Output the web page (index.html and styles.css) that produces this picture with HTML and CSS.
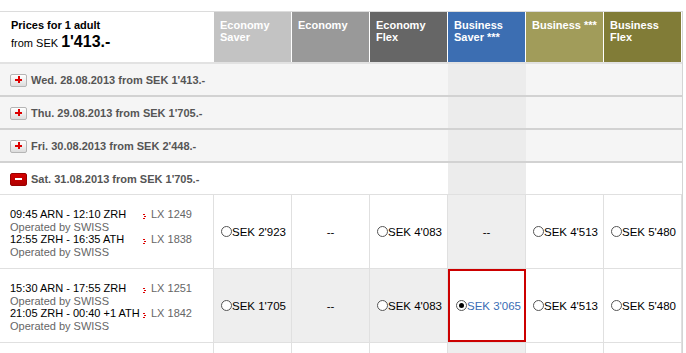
FILE: index.html
```html
<!DOCTYPE html>
<html>
<head>
<meta charset="utf-8">
<link rel="stylesheet" href="styles.css">
</head>
<body>
<div class="table">
  <div class="head">
    <div class="hcell first">
      <div class="pf">Prices for 1 adult</div>
      <div class="from">from SEK <b>1'413.-</b></div>
    </div>
    <div class="hcell c1">Economy<br>Saver</div>
    <div class="hcell c2">Economy</div>
    <div class="hcell c3">Economy<br>Flex</div>
    <div class="hcell c4">Business<br>Saver ***</div>
    <div class="hcell c5">Business ***</div>
    <div class="hcell c6">Business<br>Flex</div>
  </div>

  <div class="day">
    <div class="dlabel"><span class="btn plus"></span>Wed. 28.08.2013 from SEK 1'413.-</div>
    <div></div><div></div><div></div><div class="hl"></div><div></div><div></div>
  </div>
  <div class="day">
    <div class="dlabel"><span class="btn plus"></span>Thu. 29.08.2013 from SEK 1'705.-</div>
    <div></div><div></div><div></div><div class="hl"></div><div></div><div></div>
  </div>
  <div class="day">
    <div class="dlabel"><span class="btn plus"></span>Fri. 30.08.2013 from SEK 2'448.-</div>
    <div></div><div></div><div></div><div class="hl"></div><div></div><div></div>
  </div>
  <div class="day open">
    <div class="dlabel"><span class="btn minus"></span>Sat. 31.08.2013 from SEK 1'705.-</div>
    <div></div><div></div><div></div><div class="hl"></div><div></div><div></div>
  </div>

  <div class="flight">
    <div class="info">
      <div class="seg"><span class="t">09:45 ARN - 12:10 ZRH</span><span class="fn"><svg class="dot" width="3" height="5" viewBox="0 0 3 5"><rect x="0" y="0" width="2" height="1" fill="#d00"/><rect x="1" y="2" width="2" height="1" fill="#d00"/><rect x="0" y="4" width="2" height="1" fill="#d00"/></svg>LX 1249</span></div>
      <div class="op">Operated by SWISS</div>
      <div class="seg"><span class="t">12:55 ZRH - 16:35 ATH</span><span class="fn"><svg class="dot" width="3" height="5" viewBox="0 0 3 5"><rect x="0" y="0" width="2" height="1" fill="#d00"/><rect x="1" y="2" width="2" height="1" fill="#d00"/><rect x="0" y="4" width="2" height="1" fill="#d00"/></svg>LX 1838</span></div>
      <div class="op">Operated by SWISS</div>
    </div>
    <div class="price"><span class="radio"></span>SEK 2'923</div>
    <div class="price none">--</div>
    <div class="price"><span class="radio"></span>SEK 4'083</div>
    <div class="price none hl">--</div>
    <div class="price"><span class="radio"></span>SEK 4'513</div>
    <div class="price"><span class="radio"></span>SEK 5'480</div>
  </div>

  <div class="flight">
    <div class="info">
      <div class="seg"><span class="t">15:30 ARN - 17:55 ZRH</span><span class="fn"><svg class="dot" width="3" height="5" viewBox="0 0 3 5"><rect x="0" y="0" width="2" height="1" fill="#d00"/><rect x="1" y="2" width="2" height="1" fill="#d00"/><rect x="0" y="4" width="2" height="1" fill="#d00"/></svg>LX 1251</span></div>
      <div class="op">Operated by SWISS</div>
      <div class="seg"><span class="t">21:05 ZRH - 00:40 +1 ATH</span><span class="fn"><svg class="dot" width="3" height="5" viewBox="0 0 3 5"><rect x="0" y="0" width="2" height="1" fill="#d00"/><rect x="1" y="2" width="2" height="1" fill="#d00"/><rect x="0" y="4" width="2" height="1" fill="#d00"/></svg>LX 1842</span></div>
      <div class="op">Operated by SWISS</div>
    </div>
    <div class="price hl"><span class="radio"></span>SEK 1'705</div>
    <div class="price none hl">--</div>
    <div class="price hl"><span class="radio"></span>SEK 4'083</div>
    <div class="price selected"><span class="radio on"></span>SEK 3'065</div>
    <div class="price"><span class="radio"></span>SEK 4'513</div>
    <div class="price"><span class="radio"></span>SEK 5'480</div>
  </div>

  <div class="flight short">
    <div class="info"></div>
    <div class="price"></div><div class="price"></div><div class="price"></div>
    <div class="price hl"></div><div class="price"></div><div class="price"></div>
  </div>
</div>
</body>
</html>
```

FILE: styles.css
```css
* { box-sizing: border-box; }
html, body { margin: 0; padding: 0; background: #fff; }
body {
  font-family: "Liberation Sans", Arial, sans-serif;
  font-size: 11px;
  color: #000;
  width: 686px;
  height: 353px;
  overflow: hidden;
}
.table {
  margin-top: 11px;
  width: 683px;
  border-top: 1px solid #dcdcdc;
  border-right: 1px solid #d4d4d4;
}
.head, .day, .flight {
  display: grid;
  grid-template-columns: 214px repeat(6, 78px);
}
.head {
  height: 52px;
  border-bottom: 2px solid #e2e2e2;
}
.hcell {
  color: #fff;
  font-weight: bold;
  font-size: 11px;
  line-height: 12px;
  padding: 7px 0 0 6px;
  border-right: 1px solid #fff;
}
.hcell.first {
  color: #000;
  padding: 7px 0 0 11px;
  border-right: none;
}
.pf { line-height: 12px; }
.from { margin-top: 5px; font-size: 11px; font-weight: normal; }
.from b { font-size: 16px; font-weight: bold; }
.c1 { background: #c3c3c3; }
.c2 { background: #999999; }
.c3 { background: #666666; }
.c4 { background: #3c6eb2; }
.c5 { background: #a19c5a; }
.c6 { background: #817c37; }

.day {
  height: 33px;
  background: #f5f5f5;
  border-bottom: 2px solid #d2d2d2;
}
.day.open { background: #fff; border-bottom: 1px solid #e0e0e0; height: 32px; }
.day .hl { background: #ececec; }
.dlabel {
  display: flex;
  align-items: center;
  padding: 1px 0 0 10px;
  font-weight: bold;
  color: #555;
  white-space: nowrap;
  font-size: 11px;
}
.btn {
  position: relative;
  display: inline-block;
  width: 17px;
  height: 13px;
  margin-right: 4px;
  border-radius: 2px;
}
.btn.plus {
  border: 1px solid #b5b5b5;
  background: linear-gradient(#ffffff, #dcdcdc);
}
.btn.plus::before, .btn.plus::after, .btn.minus::before {
  content: "";
  position: absolute;
  background: #d00;
}
.btn.plus::before { left: 4px; top: 4px; width: 7px; height: 2px; }
.btn.plus::after { left: 6.5px; top: 1.5px; width: 2px; height: 7px; }
.btn.minus {
  border: 1px solid #900;
  background: linear-gradient(#d40000, #b00000);
}
.btn.minus::before { left: 4px; top: 4px; width: 7px; height: 2px; background: #fff; }

.flight {
  height: 74px;
  border-bottom: 1px solid #e0e0e0;
}
.flight.short { height: 20px; border-bottom: none; }
.info {
  padding: 13px 0 0 10px;
  border-right: 1px solid #e0e0e0;
  line-height: 12.7px;
  font-size: 11px;
}
.seg { display: flex; white-space: nowrap; }
.seg .t { width: 133px; }
.fn { color: #666; display: flex; align-items: center; }
.dot { margin-right: 5px; margin-top: 4px; }
.op { color: #666; }
.price {
  display: flex;
  align-items: center;
  padding-left: 7px;
  border-right: 1px solid #e0e0e0;
  font-size: 11.5px;
  white-space: nowrap;
}
.price.none { justify-content: center; padding-left: 0; }
.price.hl { background: #eeeeee; }
.price.selected {
  border: 2px solid #cc0000;
  color: #3a6db5;
  padding-left: 6px;
}
.radio {
  position: relative;
  display: inline-block;
  width: 11px;
  height: 11px;
  border: 1px solid #555;
  border-radius: 50%;
  background: #fff;
  flex-shrink: 0;
}
.radio.on::after {
  content: "";
  position: absolute;
  left: 2px; top: 2px;
  width: 5px; height: 5px;
  border-radius: 50%;
  background: #000;
}
```
